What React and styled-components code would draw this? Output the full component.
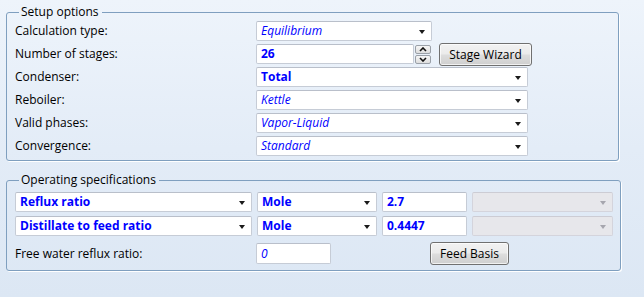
import React from 'react';
import styled, { createGlobalStyle } from 'styled-components';

const GlobalStyle = createGlobalStyle`
  html, body {
    margin: 0;
    padding: 0;
  }
  body {
    font-family: "Open Sans", "Noto Sans", sans-serif;
    font-size: 12px;
    color: #000;
  }
`;

const Page = styled.div`
  width: 644px;
  height: 297px;
  box-sizing: border-box;
  padding: 4px 0 0 6px;
  background: linear-gradient(180deg, #eef4fb 0%, #e3ecf7 50%, #dce7f4 100%);
  overflow: hidden;
`;

const Group = styled.fieldset`
  width: 613px;
  box-sizing: border-box;
  margin: 0 0 ${p => p.$after || 0}px 0;
  padding: ${p => p.$pad};
  border: 1px solid #7f9fbf;
  border-radius: 3px;
  box-shadow: 1px 1px 0 #ffffff;
`;

const Legend = styled.legend`
  padding: 0 3px 0 2px;
  margin-left: 4px;
  line-height: 16px;
  font-size: 12px;
`;

const FormGrid = styled.div`
  display: grid;
  grid-template-columns: 241px 1fr;
  row-gap: 3px;
  align-items: center;
`;

const Label = styled.div`
  height: 20px;
  line-height: 20px;
  white-space: nowrap;
`;

const Field = styled.div`
  display: flex;
  align-items: center;
  gap: 8px;
  height: 20px;
`;

const Combo = styled.div`
  position: relative;
  width: ${p => p.$w}px;
  height: ${p => p.$h || 20}px;
  box-sizing: border-box;
  border: 1px solid ${p => (p.$disabled ? '#d4d4dc' : '#c6ccd6')};
  border-top-color: ${p => (p.$disabled ? '#ccccd4' : '#b9bfca')};
  border-radius: 2px;
  background: ${p => (p.$disabled ? '#e7e7eb' : '#ffffff')};
  padding: 0 18px 0 4px;
  line-height: ${p => (p.$h || 20) - 2}px;
  color: #0000ff;
  font-weight: ${p => (p.$bold ? 700 : 400)};
  font-style: ${p => (p.$italic ? 'italic' : 'normal')};
  white-space: nowrap;
  overflow: hidden;
  flex: none;

  &::after {
    content: '';
    display: ${p => (p.$input ? 'none' : 'block')};
    position: absolute;
    right: 6px;
    top: 50%;
    margin-top: -1px;
    border-left: 3.5px solid transparent;
    border-right: 3.5px solid transparent;
    border-top: 4px solid ${p => (p.$disabled ? '#a6a6ae' : '#1a1a1a')};
  }
`;

const Spinner = styled.div`
  display: flex;
  flex-direction: column;
  gap: 1px;
  margin-left: -7px;
  width: 16px;
  flex: none;
`;

const SpinButton = styled.div`
  height: 9px;
  box-sizing: border-box;
  border: 1px solid #9aa0a8;
  border-radius: 2px;
  background: linear-gradient(180deg, #f6f6f6, #dedede);
  display: flex;
  align-items: center;
  justify-content: center;
`;

const Button = styled.div`
  width: ${p => p.$w}px;
  height: ${p => p.$h || 23}px;
  box-sizing: border-box;
  border: 1px solid #707070;
  border-radius: 3px;
  background: linear-gradient(180deg, #f2f2f2 0%, #ebebeb 48%, #dddddd 52%, #cfcfcf 100%);
  box-shadow: inset 0 0 0 1px rgba(255, 255, 255, 0.7);
  display: flex;
  align-items: center;
  justify-content: center;
  font-size: 12px;
  flex: none;
  margin: ${p => p.$margin || 0};
`;

const SpecRows = styled.div`
  display: flex;
  flex-direction: column;
  gap: 4px;
`;

const SpecRow = styled.div`
  display: flex;
  gap: 5px;
`;

const FreeRow = styled.div`
  display: grid;
  grid-template-columns: 241px 75px 1fr;
  align-items: center;
  margin-top: 6px;
  height: 23px;
`;

const Chevron = ({ up }) => (
  <svg width="8" height="5" viewBox="0 0 8 5">
    <path
      d={up ? 'M1 4 L4 1 L7 4' : 'M1 1 L4 4 L7 1'}
      fill="none"
      stroke="#111"
      strokeWidth="1.6"
    />
  </svg>
);

const SetupOptions = () => (
  <Group $pad="1px 7px 4px 8px" $after={11}>
    <Legend>Setup options</Legend>
    <FormGrid>
      <Label>Calculation type:</Label>
      <Field>
        <Combo $w={176} $italic>Equilibrium</Combo>
      </Field>

      <Label>Number of stages:</Label>
      <Field>
        <Combo $w={158} $bold $input>26</Combo>
        <Spinner>
          <SpinButton><Chevron up /></SpinButton>
          <SpinButton><Chevron /></SpinButton>
        </Spinner>
        <Button $w={93} $margin="-1px 0 -2px 0">Stage Wizard</Button>
      </Field>

      <Label>Condenser:</Label>
      <Field>
        <Combo $w={272} $bold>Total</Combo>
      </Field>

      <Label>Reboiler:</Label>
      <Field>
        <Combo $w={272} $italic>Kettle</Combo>
      </Field>

      <Label>Valid phases:</Label>
      <Field>
        <Combo $w={272} $italic>Vapor-Liquid</Combo>
      </Field>

      <Label>Convergence:</Label>
      <Field>
        <Combo $w={272} $italic>Standard</Combo>
      </Field>
    </FormGrid>
  </Group>
);

const specs = [
  { name: 'Reflux ratio', basis: 'Mole', value: '2.7' },
  { name: 'Distillate to feed ratio', basis: 'Mole', value: '0.4447' },
];

const OperatingSpecs = () => (
  <Group $pad="4px 7px 5px 8px">
    <Legend>Operating specifications</Legend>
    <SpecRows>
      {specs.map(s => (
        <SpecRow key={s.name}>
          <Combo $w={237} $bold>{s.name}</Combo>
          <Combo $w={120} $bold>{s.basis}</Combo>
          <Combo $w={85} $bold $input>{s.value}</Combo>
          <Combo $w={141} $disabled />
        </SpecRow>
      ))}
    </SpecRows>
    <FreeRow>
      <Label>Free water reflux ratio:</Label>
      <Combo $w={75} $h={21} $italic $input>0</Combo>
      <div>
        <Button $w={79} $margin="0 0 0 99px">Feed Basis</Button>
      </div>
    </FreeRow>
  </Group>
);

export default function App() {
  return (
    <Page>
      <GlobalStyle />
      <SetupOptions />
      <OperatingSpecs />
    </Page>
  );
}
